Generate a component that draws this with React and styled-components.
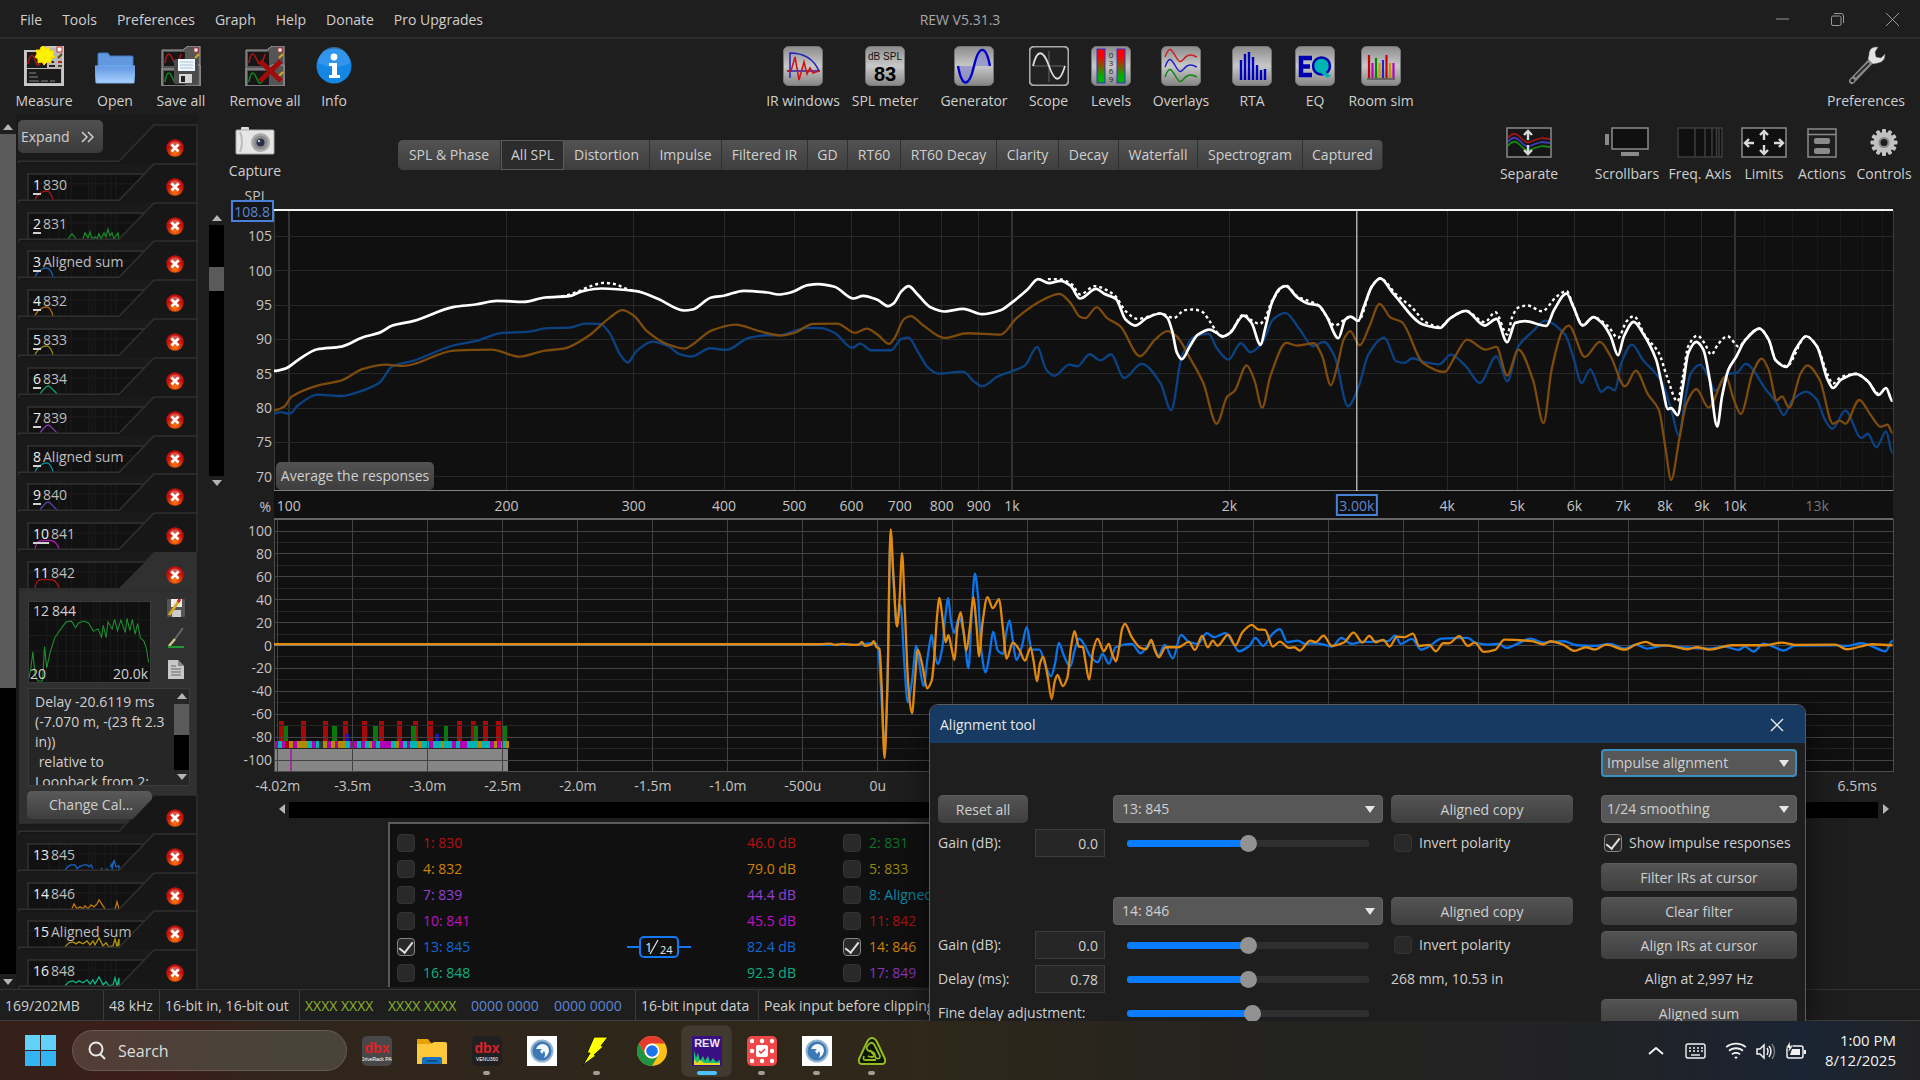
import React from "react";
import styled, { createGlobalStyle, css } from "styled-components";
import { RiWifiLine } from "react-icons/ri";

const GlobalStyle = createGlobalStyle`
    * { box-sizing: border-box; }
    body {
        margin: 0;
        background: #1e1e1e;
        color: #cfcfcf;
        font-family: "Open Sans", "Noto Sans", sans-serif;
        font-size: 14px;
        line-height: 20px;
        overflow: hidden;
    }
    button, input, select, textarea { font: inherit; color: inherit; }
    button { border: 0; padding: 0; background: none; }
    svg { display: block; }
`

/* ---------- frame ---------- */

const Screen = styled.div`
    display: flex;
    flex-direction: column;
    height: 100vh;
`

const AppWindow = styled.div`
    position: relative;
    flex: 1;
    min-height: 0;
    display: flex;
    flex-direction: column;
    overflow: hidden;
`

const TitleBar = styled.header`
    display: grid;
    grid-template-columns: 1fr auto 1fr;
    align-items: center;
    height: 39px;
    padding-top: 2px;
    border-bottom: 2px solid #2d2d2d;
`

const MenuList = styled.nav`
    display: flex;
    gap: 20px;
    padding-left: 20px;
`

const AppTitle = styled.h1`
    margin: 0;
    font-size: 14px;
    font-weight: 400;
    color: #a8a8a8;
`

const WindowButtons = styled.div`
    justify-self: end;
    display: flex;
    button {
        display: grid;
        place-items: center;
        width: 55px;
        height: 35px;
    }
`

const Toolbar = styled.div`
    display: flex;
    align-items: flex-start;
    height: 76px;
    padding: 7px 10px 0 8px;
`

const Spacer = styled.div`
    flex: ${(props) => props.$grow || 1};
`

const ToolButton = styled.button`
    display: flex;
    flex-direction: column;
    align-items: center;
    flex: none;
    gap: ${(props) => props.$gap || 5}px;
    width: ${(props) => props.$width}px;
    white-space: nowrap;
`

const Workspace = styled.div`
    flex: 1;
    min-height: 0;
    display: grid;
    grid-template-columns: 16px 182px minmax(0, 1fr);
`

/* ---------- scrollbars ---------- */

const Scroll = styled.div`
    display: flex;
    flex-direction: ${(props) => (props.$horizontal ? "row" : "column")};
    min-height: 0;
    padding-top: ${(props) => props.$top || 0};
`

const Track = styled.div`
    flex: 1;
    background: #000;
    padding-top: ${(props) => props.$offset || 0};
`

const Thumb = styled.div`
    height: ${(props) => props.$size};
    background: #5a5a5a;
`

const ScrollArrow = styled.button`
    display: grid;
    place-items: center;
    flex: none;
    width: 15px;
    height: 15px;
    svg { transform: rotate(${(props) => props.$turn || 0}deg); }
`

function Arrow({ turn, label }) {
    return (
        <ScrollArrow $turn={turn} aria-label={label}>
            <svg width="10" height="6"><path d="M0 6L5 0L10 6Z" fill="#b4b4b4" /></svg>
        </ScrollArrow>
    )
}

/* ---------- measurement list ---------- */

const Side = styled.aside`
    display: grid;
    grid-template-columns: minmax(0, 1fr);
    grid-template-rows: repeat(12, minmax(0, 1fr)) 204px repeat(5, minmax(0, 1fr));
    padding: 10px 1px 0 3px;
    background: #1a1a1a;
`

const TabRow = styled.div`
    position: relative;
    display: flex;
    justify-content: space-between;
    > svg {
        position: absolute;
        inset: 0;
        width: 100%;
        height: 100%;
        overflow: visible;
    }
`

const TabLabel = styled.div`
    position: relative;
    display: flex;
    gap: 2px;
    height: 20px;
    margin: 11px 0 0 14px;
    color: #bdbdbd;
    white-space: nowrap;
    b {
        font-weight: 400;
        color: #ededed;
        line-height: 19px;
        border-bottom: ${(props) => (props.$key ? "2px solid #d0d0d0" : "0")};
    }
`

const RemoveButton = styled.button`
    position: relative;
    align-self: flex-start;
    margin: 14px 13px 0 auto;
`

const ExpandButton = styled.button`
    position: relative;
    z-index: 1;
    display: flex;
    align-items: center;
    justify-content: space-between;
    width: 85px;
    height: 33px;
    margin: -5px 0 0 -1px;
    padding: 0 8px 0 3px;
    border-radius: 5px;
    background: linear-gradient(#4f4f4f, #3b3b3b);
`

const CalButton = styled.button`
    position: relative;
    width: 125px;
    height: 28px;
    margin: -4px 0 0 8px;
    padding-right: 19px;
    border-radius: 5px;
    background: linear-gradient(#5a5a5a, #3e3e3e);
    clip-path: polygon(0 0, 100% 0, 100% 8px, 106px 100%, 0 100%);
    text-align: right;
`

const SelectedPanel = styled.section`
    padding: 10px 7px 9px 9px;
    background: #303030;
    display: flex;
    flex-direction: column;
    gap: 5px;
`

const SelectedTop = styled.div`
    display: grid;
    grid-template-columns: 123px 1fr;
    height: 82px;
`

const Preview = styled.div`
    position: relative;
    background: #101010;
    border: 1px solid #3a3a3a;
    display: flex;
    flex-direction: column;
    justify-content: space-between;
    padding: 0 2px 0 4px;
    > svg {
        position: absolute;
        inset: 0;
        width: 100%;
        height: 100%;
    }
    div {
        position: relative;
        display: flex;
        justify-content: space-between;
        line-height: 16px;
        margin-left: -3px;
    }
    div:first-of-type { margin: 1px 0 0; justify-content: flex-start; gap: 3px; }
`

const PreviewTools = styled.div`
    display: flex;
    flex-direction: column;
    align-items: center;
    justify-content: space-around;
    padding-left: 10px;
    margin: -8px 0 -2px;
`

const Notes = styled.div`
    display: flex;
    flex: 1;
    min-height: 0;
    border: 1px solid #3a3a3a;
    background: #262626;
    textarea {
        flex: 1;
        width: 0;
        padding: 3px 0 0 6px;
        border: 0;
        background: none;
        resize: none;
        overflow: hidden;
        white-space: pre;
    }
`

/* ---------- graph ---------- */

const GraphPane = styled.main`
    display: flex;
    flex-direction: column;
    min-width: 0;
    min-height: 0;
`

const GraphHeader = styled.div`
    display: flex;
    align-items: flex-start;
    height: 95px;
    padding: 12px 7px 0 0;
`

const GraphTabs = styled.div`
    display: flex;
    margin: 13px 0 0 86px;
    height: 30px;
    border-radius: 5px;
    overflow: hidden;
    background: linear-gradient(#525252, #3e3e3e);
`

const GraphTab = styled.button`
    width: ${(props) => props.$width}px;
    white-space: nowrap;
    border-right: 1px solid #303030;
    ${(props) => props.$active && css`
        background: #2c2c2c;
        border: 1px solid #5c5c5c;
    `}
`

const GraphGrid = styled.div`
    flex: 1;
    min-height: 0;
    display: grid;
    grid-template-columns: 26px 50px minmax(0, 1fr) 27px;
    grid-template-rows: 280fr 28px 252fr 31px 16px;
`

const Canvas = styled.svg`
    width: 100%;
    height: 100%;
    overflow: visible;
    font-size: 14px;
    fill: #c4c4c4;
`

const Plot = styled.div`
    position: relative;
    grid-column: 3;
    background: #101010;
    min-height: 0;
`

const Gutter = styled.div`
    grid-column: 2;
    min-height: 0;
`

const SplScroll = styled.div`
    grid-column: 1;
    justify-self: end;
    display: grid;
    min-height: 0;
`

const AverageButton = styled.button`
    position: absolute;
    left: 2px;
    bottom: 1px;
    width: 158px;
    height: 28px;
    border-radius: 5px;
    background: linear-gradient(#525252, #3e3e3e);
    white-space: nowrap;
`

const TimeScroll = styled.div`
    grid-column: 3;
    display: grid;
`

/* ---------- legend ---------- */

const Legend = styled.section`
    display: grid;
    grid-template-columns: repeat(3, minmax(0, 446px));
    grid-auto-rows: 26px;
    align-self: center;
    height: 165px;
    margin: 4px 27px 2px 76px;
    padding: 6px 44px 0 7px;
    border: solid #5a5a5a;
    border-width: 2px 0 0 2px;
    background: #101010;
`

const LegendItem = styled.label`
    display: grid;
    grid-template-columns: 26px 1fr 120px 96px;
    align-items: center;
    color: ${(props) => props.$color};
    white-space: nowrap;
`

const CheckBox = styled.input`
    appearance: none;
    display: grid;
    place-items: center;
    width: 18px;
    height: 18px;
    margin: 0;
    border: 1px solid #343434;
    border-radius: 4px;
    background: #292929;
    &:checked { border-color: #848484; }
    &:checked::before {
        content: "";
        width: 6px;
        height: 12px;
        border: solid #e0e0e0;
        border-width: 0 2px 2px 0;
        transform: translateY(-1px) rotate(38deg);
    }
`

/* ---------- status bar ---------- */

const StatusBar = styled.footer`
    display: flex;
    height: 32px;
    flex: none;
    border-top: 1px solid #333;
    border-bottom: 1px solid #3d3d3d;
    white-space: pre;
`

const StatusCell = styled.div`
    display: flex;
    align-items: center;
    gap: 10px;
    flex: none;
    width: ${(props) => (props.$width ? props.$width + "px" : "auto")};
    padding: 2px 0 0 5px;
    border-right: 1px solid #3a3a3a;
`

const Bits = styled.span`
    color: ${(props) => props.$color};
    width: 73px;
`

/* ---------- alignment window ---------- */

const ToolWindow = styled.section`
    position: absolute;
    left: 929px;
    top: 704px;
    width: 877px;
    bottom: 0;
    overflow: hidden;
    border: 1px solid #5c5c5c;
    border-bottom-width: 0;
    border-radius: 9px 9px 0 0;
    background: #1e1e1e;
    box-shadow: 0 8px 34px rgba(0, 0, 0, 0.6);
`

const ToolTitle = styled.div`
    display: flex;
    align-items: center;
    justify-content: space-between;
    height: 38px;
    padding: 2px 21px 0 10px;
    background: #163a61;
    color: #e8e8e8;
`

const ToolBody = styled.div`
    display: flex;
    gap: 28px;
    padding: 6px 8px 0;
`

const ToolGrid = styled.div`
    display: grid;
    grid-template-columns: 167px 270px 182px;
    grid-auto-rows: 28px;
    gap: 6px 8px;
    align-items: center;
    margin-top: 46px;
`

const ToolSide = styled.div`
    flex: 1;
    display: grid;
    grid-template-rows: 40px;
    grid-auto-rows: 28px;
    gap: 6px;
    align-items: center;
    text-align: center;
    white-space: nowrap;
    > :first-child { align-self: start; }
`

const PushButton = styled.button`
    width: ${(props) => props.$width || "100%"};
    height: 28px;
    border-radius: 5px;
    border-top: 1px solid #5c5c5c;
    background: linear-gradient(#535353, #3f3f3f);
`

const Field = styled.label`
    display: flex;
    align-items: center;
    justify-content: space-between;
    white-space: nowrap;
    input {
        width: 70px;
        height: 28px;
        padding: 0 6px;
        border: 1px solid #3c3c3c;
        background: #262626;
        text-align: right;
    }
`

const CheckField = styled.label`
    display: flex;
    align-items: center;
    gap: 7px;
    padding-left: 3px;
`

const SelectBox = styled.div`
    position: relative;
    height: 28px;
    select {
        appearance: none;
        width: 100%;
        height: 28px;
        padding: 0 ${(props) => props.$pad}px;
        border: ${(props) => (props.$focus ? "2px solid #3b8ec0" : "1px solid #626262")};
        border-radius: 4px;
        background: #575757;
        outline: 0;
    }
    svg {
        position: absolute;
        right: 8px;
        top: 11px;
    }
`

const Slider = styled.input`
    appearance: none;
    width: 242px;
    height: 20px;
    margin: 0 14px;
    background: none;
    &::-webkit-slider-runnable-track {
        height: 7px;
        border-radius: 3px;
        background: linear-gradient(90deg, #0a7cff var(--fill), #2f2f2f var(--fill));
    }
    &::-webkit-slider-thumb {
        appearance: none;
        width: 17px;
        height: 17px;
        margin-top: -5px;
        border-radius: 50%;
        background: #929292;
    }
`

/* ---------- taskbar ---------- */

const TaskBar = styled.footer`
    display: flex;
    align-items: center;
    flex: none;
    height: 59px;
    padding: 0 24px 0 25px;
    background: linear-gradient(90deg, #35211a 0, #3c1d19 160px, #30251c 280px, #2f281a 900px, #24231f 1250px, #212225 1600px, #1a2433 1810px, #222224 100%);
    color: #f2f2f2;
`

const SearchBox = styled.label`
    display: flex;
    align-items: center;
    gap: 12px;
    width: 275px;
    height: 41px;
    margin: 0 2px 0 16px;
    padding-left: 14px;
    border: 1px solid #655d56;
    border-radius: 21px;
    background: linear-gradient(90deg, #553c36, #4b423a 50%, #494439);
    input {
        width: 180px;
        border: 0;
        padding: 0;
        background: none;
        outline: 0;
        font-size: 16px;
    }
    input::placeholder { color: #dedede; opacity: 1; }
`

const TaskButton = styled.button`
    position: relative;
    display: grid;
    place-items: center;
    width: 49px;
    height: 50px;
    margin: 0 3px;
    border-radius: 6px;
    ${(props) => props.$active && css`
        background: rgba(255, 255, 255, 0.09);
        box-shadow: 0 0 0 1px rgba(255, 255, 255, 0.06);
    `}
    &::after {
        content: "";
        display: ${(props) => (props.$open ? "block" : "none")};
        position: absolute;
        bottom: 1px;
        width: ${(props) => (props.$active ? 20 : 7)}px;
        height: 4px;
        border-radius: 2px;
        background: ${(props) => (props.$active ? "#4cc2ff" : "#a09c96")};
    }
`

const Tray = styled.div`
    display: flex;
    align-items: center;
    gap: 9px;
    margin-left: auto;
`

const Clock = styled.time`
    width: 80px;
    padding-bottom: 2px;
    font-size: 15px;
    text-align: right;
`

/* ---------- chart data ---------- */

// lay the second stretch of a trace after the first one
const extend = (head, tail, dx, dy = 0, scale = 1) => [
    ...head,
    ...tail.map(([x, y]) => [x * scale + dx, y + dy]),
]

// smooth path, flat at every local peak and dip
function smooth(points) {
    const n = points.length
    const slope = points.map((p, i) => {
        if (i === 0 || i === n - 1) return 0
        const a = (p[1] - points[i - 1][1]) / (p[0] - points[i - 1][0])
        const b = (points[i + 1][1] - p[1]) / (points[i + 1][0] - p[0])
        return a * b <= 0 ? 0 : (2 * a * b) / (a + b)
    })
    let d = `M${points[0][0]} ${points[0][1]}`
    for (let i = 1; i < n; i++) {
        const [x0, y0] = points[i - 1]
        const [x1, y1] = points[i]
        const h = (x1 - x0) / 3
        d += `C${(x0 + h).toFixed(1)} ${(y0 + slope[i - 1] * h).toFixed(1)} ${(x1 - h).toFixed(1)} ${(y1 - slope[i] * h).toFixed(1)} ${x1.toFixed(1)} ${y1}`
    }
    return d
}

const sumLow = [[64,574],[85,567],[110,540],[145,509],[190,501],[230,473],[260,460],[285,438],[325,424],[400,382],[440,375],[480,364],[530,367],[570,354],[615,350],[640,335],[675,327],[740,335],[780,358],[830,393],[845,390],[880,354],[905,348],[940,334],[985,339],[1005,345],[1030,338],[1060,317],[1080,314],[1110,322],[1145,357],[1163,349],[1190,361],[1210,380],[1220,372],[1235,335],[1248,320],[1265,345],[1290,384],[1315,396],[1350,388],[1385,404],[1420,392],[1440,370],[1470,330],[1490,299],[1510,311],[1532,304],[1550,318]]
const sumHigh = [[0,357],[30,328],[45,343],[67,358],[85,420],[103,438],[125,415],[150,402],[163,415],[172,455],[181,520],[190,539],[205,500],[220,465],[242,450],[255,460],[265,471],[280,460],[305,408],[320,430],[337,496],[345,450],[358,370],[372,328],[384,320],[405,353],[425,372],[445,378],[460,410],[482,476],[495,420],[505,411],[519,424],[530,380],[545,320],[560,297],[585,343],[640,435],[672,445],[690,417],[720,394],[755,438],[777,418],[797,488],[812,430],[830,425],[870,439],[885,390],[908,342],[920,380],[938,438],[958,413],[975,432],[990,470],[1004,527],[1015,470],[1033,427],[1050,460],[1075,540],[1087,625],[1097,688],[1103,685],[1115,706],[1125,620],[1135,520],[1150,487],[1163,510],[1175,600],[1189,740],[1198,650],[1210,570],[1225,530],[1240,485],[1268,447],[1285,480],[1298,542],[1318,562],[1335,510],[1355,470],[1375,500],[1395,600],[1405,625],[1420,600],[1448,583],[1470,605],[1490,646],[1504,625],[1516,664]]
const idealLow = [[600,350],[630,337],[655,320],[680,310],[700,314],[722,328],[740,335]]
const idealHigh = [[-60,299],[-36,300],[-15,315],[0,345],[28,320],[50,332],[67,352],[85,395],[108,418],[150,402],[175,415],[195,392],[212,390],[228,397],[242,425],[258,462],[268,470],[282,455],[305,405],[320,422],[335,433],[345,418],[358,365],[384,318],[405,350],[445,378],[460,410],[475,438],[505,411],[519,424],[545,320],[560,297],[590,345],[620,385],[645,428],[672,442],[690,417],[720,394],[755,428],[775,398],[797,465],[807,410],[817,385],[835,378],[862,395],[890,350],[908,335],[920,378],[938,436],[958,413],[985,440],[1004,475],[1020,425],[1033,410],[1055,470],[1080,520],[1095,590],[1115,665],[1125,590],[1135,500],[1152,468],[1165,490],[1178,525],[1190,495],[1208,470],[1230,502],[1240,482],[1268,447],[1285,480],[1298,542],[1318,560],[1355,470],[1375,500],[1395,585],[1405,612],[1420,592],[1448,583],[1470,605],[1490,642]]
const woofLow = [[64,692],[82,682],[98,650],[145,618],[190,602],[230,568],[272,555],[305,559],[400,513],[470,510],[522,531],[570,513],[605,507],[650,470],[690,415],[714,392],[735,408],[760,455],[795,492],[830,507],[845,495],[880,453],[925,435],[970,455],[1010,468],[1035,460],[1070,433],[1115,432],[1148,460],[1170,447],[1190,465],[1212,493],[1222,475],[1240,418],[1252,410],[1275,437],[1315,475],[1358,461],[1420,465],[1450,415],[1500,360],[1530,343],[1550,370]]
const woofHigh = [[0,412],[10,416],[31,383],[50,415],[75,440],[112,530],[140,480],[163,455],[180,470],[205,535],[230,610],[255,732],[275,650],[288,635],[311,557],[325,600],[340,684],[355,590],[385,490],[405,498],[437,491],[452,530],[468,617],[480,560],[492,480],[504,455],[522,497],[540,440],[559,373],[580,415],[600,427],[640,550],[680,577],[700,530],[722,480],[757,510],[777,502],[797,588],[818,510],[845,600],[865,730],[880,570],[900,455],[912,438],[942,532],[970,487],[990,530],[1017,620],[1037,573],[1060,645],[1080,690],[1092,800],[1103,900],[1118,780],[1132,670],[1150,628],[1173,684],[1205,590],[1220,660],[1233,703],[1255,580],[1272,537],[1285,570],[1300,662],[1310,650],[1323,684],[1345,580],[1357,557],[1380,600],[1405,732],[1418,723],[1428,732],[1454,661],[1475,705],[1494,741],[1507,735],[1516,760]]
const hornLow = [[64,702],[75,697],[93,702],[110,675],[145,645],[190,649],[225,635],[260,610],[285,560],[325,543],[400,497],[440,485],[490,460],[535,457],[575,446],[615,444],[645,432],[672,433],[690,460],[710,525],[724,549],[740,515],[770,486],[800,500],[820,523],[842,531],[878,506],[908,511],[950,475],[985,467],[1005,467],[1060,445],[1085,446],[1110,460],[1143,505],[1158,492],[1178,512],[1215,512],[1235,478],[1248,474],[1265,515],[1285,565],[1303,582],[1350,576],[1370,605],[1385,620],[1415,590],[1465,558],[1488,502],[1505,570],[1520,589],[1548,555]]
const hornHigh = [[-5,560],[18,524],[38,542],[58,524],[82,595],[115,553],[150,610],[170,692],[190,530],[215,470],[240,462],[255,505],[277,540],[300,491],[318,518],[340,490],[360,420],[383,400],[410,450],[435,500],[455,487],[475,530],[500,680],[520,620],[538,525],[568,474],[590,545],[605,550],[620,536],[645,548],[670,554],[692,525],[720,560],[746,610],[777,530],[797,605],[818,500],[845,455],[868,423],[905,465],[920,530],[936,610],[952,569],[973,637],[985,622],[998,632],[1010,550],[1030,495],[1050,540],[1085,605],[1105,700],[1117,767],[1130,650],[1140,580],[1157,555],[1172,590],[1185,633],[1210,582],[1225,580],[1242,553],[1280,630],[1300,670],[1313,706],[1330,660],[1355,636],[1375,660],[1390,720],[1404,747],[1428,693],[1458,775],[1470,762],[1486,803],[1504,755],[1516,820]]

const splTraces = [
    { d: smooth(extend(hornLow, hornHigh, 1568)), color: "#0b4284" },
    { d: smooth(extend(woofLow, woofHigh, 1568)), color: "#7d4b0c" },
    { d: smooth(idealLow), color: "#fff", dash: "3 3", width: 2.4 },
    { d: smooth(extend([], idealHigh, 1568)), color: "#fff", dash: "3 3", width: 2.4 },
    { d: smooth(extend(sumLow, sumHigh, 1568)), color: "#fff", width: 2.7 },
]

const impulseA = [[-1471,431],[60,431],[85,429],[100,433],[120,430],[150,433],[165,433],[175,424],[183,436],[200,432],[208,422],[216,440],[224,445],[230,560],[238,772],[246,560],[255,87],[263,230],[273,378],[280,300],[287,158],[295,330],[305,560],[315,638],[323,540],[331,447],[345,500],[357,563],[370,540],[378,460],[384,360],[392,292],[400,350],[409,425],[417,404],[425,440],[434,478],[442,380],[451,335],[459,390],[467,450],[477,380],[487,290],[495,370],[503,467],[512,370],[526,290],[541,323],[559,296],[568,370],[580,474],[597,426],[615,447],[631,480],[647,441],[655,480],[665,542],[673,490],[682,468],[695,530],[706,596],[714,545],[722,523],[737,556],[750,530],[760,440],[770,392],[782,438],[793,439],[800,480],[811,537],[822,450],[834,414],[852,452],[866,430],[875,460],[886,482],[895,440],[903,385],[911,370],[930,410],[955,442],[970,446],[985,418],[995,450],[1006,470],[1025,440],[1060,440],[1090,424],[1107,448],[1127,406],[1143,440],[1157,420],[1170,436],[1200,402],[1220,435],[1240,395],[1266,373],[1285,387],[1303,388],[1325,438],[1345,423],[1370,442],[1385,440],[1400,450],[1430,420],[1445,425],[1467,405],[1490,436],[1525,425],[1551,396]]
const impulseATail = [[62,126],[80,106],[98,125],[118,118],[135,138],[155,108],[175,110],[198,99],[215,136],[242,133],[260,152],[280,128],[295,128],[323,107],[347,136],[365,126],[390,154],[420,148],[445,117],[520,122],[550,131],[570,122],[605,133],[635,151],[665,140],[690,147],[720,132],[770,147],[800,132],[828,124],[850,134],[890,135],[940,146],[965,140],[1000,147],[1060,134],[1150,134],[1195,126],[1230,133],[1340,132],[1370,146],[1440,131],[1494,134]]
const impulseB = [[-1471,433],[150,433],[210,428],[220,440],[228,560],[238,740],[246,560],[255,100],[263,230],[272,375],[283,313],[293,480],[303,605],[315,540],[327,435],[337,500],[347,556],[360,460],[370,402],[378,460],[387,490],[400,440],[408,350],[416,292],[424,360],[433,397],[447,350],[460,400],[473,503],[482,340],[491,220],[500,290],[508,440],[521,515],[532,460],[542,393],[555,450],[570,460],[578,400],[588,360],[597,420],[607,478],[622,440],[636,380],[650,447],[672,447],[690,500],[704,527],[715,490],[726,427],[740,465],[758,498],[770,450],[783,414],[797,432],[815,468],[835,485],[848,460],[866,489],[885,440],[930,430],[955,458],[985,425],[1005,465],[1022,433],[1045,473],[1068,403],[1090,424],[1115,430],[1140,398],[1160,410],[1192,398],[1215,430],[1230,452],[1260,435],[1276,412],[1298,436],[1322,402],[1345,386],[1365,425],[1395,420],[1415,430],[1440,428],[1460,430],[1490,438],[1517,412],[1545,430]]
const impulseBTail = [[62,124],[85,124],[110,120],[130,122],[150,105],[165,130],[195,115],[220,147],[245,135],[275,114],[345,112],[370,128],[400,132],[430,130],[450,142],[480,130],[515,114],[550,126],[605,122],[640,134],[690,136],[730,130],[770,144],[800,132],[830,144],[880,134],[920,140],[1000,144],[1040,138],[1078,148],[1095,138],[1119,153],[1145,129],[1175,140],[1200,150],[1230,135],[1340,134],[1370,136],[1410,128],[1440,138],[1475,152],[1494,120]]

const irTraces = [
    { d: smooth(extend(impulseB, impulseBTail, 1512, 300, 1.036)), color: "#0a74ea" },
    { d: smooth(extend(impulseA, impulseATail, 1512, 300, 1.036)), color: "#e38a0c" },
]

const pct = (v) => `${(v * 100).toFixed(3)}%`
const freqX = (f) => pct(Math.log(f / 95.4) / Math.log(16543 / 95.4))
const splY = (db) => pct((108.85 - db) / 40.85)
const timeX = (i) => pct((3.7 + i * 75) / 1618.5)
const percentY = (v) => pct((126.3 - v * 1.143) / 252)

const freqLines = [100, 200, 300, 400, 500, 600, 700, 800, 900, 1000, 2000, 3000, 4000, 5000, 6000, 7000, 8000, 9000, 10000, 11000, 12000, 13000, 14000, 15000, 16000]
const freqLabels = [[100, "100"], [200, "200"], [300, "300"], [400, "400"], [500, "500"], [600, "600"], [700, "700"], [800, "800"], [900, "900"], [1000, "1k"], [2000, "2k"], [4000, "4k"], [5000, "5k"], [6000, "6k"], [7000, "7k"], [8000, "8k"], [9000, "9k"], [10000, "10k"], [13000, "13k"]]
const splTicks = [105, 100, 95, 90, 85, 80, 75, 70]
const percentTicks = [100, 80, 60, 40, 20, 0, -20, -40, -60, -80, -100]
const timeLabels = ["-4.02m", "-3.5m", "-3.0m", "-2.5m", "-2.0m", "-1.5m", "-1.0m", "-500u", "0u"]

const clipRed = [790, 852, 915, 971, 1023, 1072, 1122, 1167, 1209, 1289, 1328, 1363, 1398]
const clipGreen = [803, 938, 1054, 1160, 1251, 1335, 1414]
const clipStrip = "mcmromooocmcxomomoocmmcmcomcmmmcomcmccoccmccoccmcmmcccoccmomco"
const stripColors = { m: "#b400b4", c: "#00b4b4", o: "#b08a00", r: "#a00", x: "#333" }

function Traces({ items, box }) {
    return (
        <svg width="100%" height="100%" viewBox={box} preserveAspectRatio="none" fill="none">
            {items.map((t, i) => (
                <path key={i} d={t.d} stroke={t.color} strokeWidth={t.width || 2.3} strokeDasharray={t.dash} strokeLinejoin="round" vectorEffect="non-scaling-stroke" />
            ))}
        </svg>
    )
}

function SplPlot() {
    return (
        <Plot>
            <Canvas>
                <g shapeRendering="crispEdges">
                    {freqLines.map((f) => (
                        <line key={f} x1={freqX(f)} x2={freqX(f)} y1="0" y2="100%" strokeWidth={f % 9000 === 1000 || f === 100 ? 2 : 1}
                            stroke={f > 10000 ? "#191919" : f === 100 || f === 1000 || f === 10000 ? "#333" : "#292929"} />
                    ))}
                    {splTicks.map((v) => <line key={v} x1="0" x2="100%" y1={splY(v)} y2={splY(v)} stroke="#272727" />)}
                    <rect width="100%" height="100%" fill="none" stroke="#3c3c3c" />
                    <line x1="0" x2="100%" y1="100%" y2="100%" stroke="#808080" strokeWidth="2" />
                </g>
                <Traces items={splTraces} box="64 92 3021 840" />
                <line x1="0" x2="100%" y1="0" y2="0" stroke="#f4f4f4" strokeWidth="2" />
                <svg x={freqX(3000)} overflow="visible">
                    <line y1="0" y2="284" stroke="#f0f0f0" strokeWidth="1" />
                </svg>
            </Canvas>
            <AverageButton>Average the responses</AverageButton>
        </Plot>
    )
}

function FreqAxis() {
    return (
        <Plot>
            <Canvas textAnchor="middle">
                {freqLabels.map(([f, text]) => (
                    <text key={f} x={freqX(f)} y="20" fill={f === 13000 ? "#777" : "#c4c4c4"}>{text}</text>
                ))}
                <svg x={freqX(3000)} overflow="visible">
                    <rect x="-20" y="4" width="40" height="20" fill="#101010" stroke="#4a80d8" strokeWidth="2" />
                    <text y="20" fill="#5c86d2">3.00k</text>
                </svg>
            </Canvas>
        </Plot>
    )
}

function ImpulsePlot() {
    return (
        <Plot>
            <Canvas>
                <svg width="100%" height="100%" viewBox="770 106 4532 706" preserveAspectRatio="none" shapeRendering="crispEdges">
                    <rect x="770" y="749" width="656" height="63" fill="#868686" />
                    {clipRed.map((x) => <rect key={x} x={x - 7} y="670" width="14" height="58" fill="#a80808" />)}
                    {clipGreen.map((x) => <rect key={x} x={x - 6} y="685" width="13" height="43" fill="#0a780a" />)}
                    {[975, 1227].map((x) => <rect key={x} x={x - 5} y="707" width="10" height="21" fill="#1414c8" />)}
                    {[...clipStrip].map((c, i) => <rect key={i} x={770 + i * 10.6} y="728" width="10.7" height="21" fill={stripColors[c]} />)}
                    <rect x="815" y="749" width="4" height="63" fill="#a030a0" />
                </svg>
                <g shapeRendering="crispEdges">
                    {percentTicks.map((v) => (
                        <React.Fragment key={v}>
                            <line x1="0" x2="100%" y1={percentY(v)} y2={percentY(v)} stroke="#444" />
                            {v > -100 && <line x1="0" x2="100%" y1={percentY(v - 10)} y2={percentY(v - 10)} stroke="#242424" />}
                        </React.Fragment>
                    ))}
                    {Array.from({ length: 22 }, (_, i) => (
                        <line key={i} x1={timeX(i)} x2={timeX(i)} y1="0" y2="100%" stroke="#424242" />
                    ))}
                    <rect width="100%" height="100%" fill="none" stroke="#4c4c4c" />
                    <line x1="0" x2="100%" y1="0" y2="0" stroke="#666" strokeWidth="2" />
                </g>
                <Traces items={irTraces} box="-1471 56 4532 756" />
            </Canvas>
        </Plot>
    )
}

/* ---------- icons ---------- */

const Tile = ({ children, dark }) => (
    <svg width="40" height="40" viewBox="0 0 40 40" fill="none">
        <defs>
            <linearGradient id="tile" x1="0" y1="0" x2="0" y2="1">
                <stop offset="0" stopColor="#8c8c8c" /><stop offset=".5" stopColor="#c8c8c8" /><stop offset="1" stopColor="#858585" />
            </linearGradient>
        </defs>
        <rect x=".5" y=".5" width="39" height="39" rx="5" fill={dark ? "#222" : "url(#tile)"} stroke={dark ? "#aaa" : "#777"} strokeWidth={dark ? 2 : 1} />
        {children}
    </svg>
)

const GraphCard = ({ y = 0, wave = "#b01515" }) => (
    <g>
        <path d={`M1 ${y + 4}H22L27 ${y}H39V40H1Z`} fill="#555" stroke="#a5a5a5" />
        <rect x="3" y={y + 6} width="21" height="14" fill="#161616" />
        <path d={`M4 ${y + 17}C6 ${y + 4} 9 ${y + 7} 12 ${y + 14}S17 ${y + 19} 20 ${y + 8}`} stroke={wave} strokeWidth="1.6" />
    </g>
)

const toolIcons = {
    measure: (
        <svg width="40" height="40" viewBox="0 0 40 40" fill="none">
            <path d="M1 5H18L22 1H39V39H1Z" fill="#b8b8b8" stroke="#c8c8c8" strokeWidth="2" />
            <rect x="3" y="6" width="20" height="16" fill="#1b1b1b" />
            <path d="M4 18C6 7 9 8 11 14S14 20 16 18" stroke="#b01515" strokeWidth="1.5" />
            <path d="M25 20h6M25 16h5" stroke="#222" strokeWidth="2" />
            <rect x="3" y="23" width="34" height="14" fill="#1a1a1a" />
            <path d="M5 27h7M5 31h9M5 35h10M17 35h7M26 35h5" stroke="#888" />
            <rect x="33" y="1" width="5" height="5" fill="#fff" stroke="#c33" />
            <path d="M34 12l4-4M34 20h4" stroke="#5a4a10" strokeWidth="2" /><path d="M34 16h4" stroke="#b22" strokeWidth="2" />
            <path d="M20 0l2 3 3-2 1 4 4 0-1 4 2 2-4 2 0 4-4-1-3 3-2-3-4 1 0-4-3-2 2-3-1-4 4 0 1-3Z" fill="#fff200" stroke="#ffd400" />
        </svg>
    ),
    open: (
        <svg width="40" height="40" viewBox="0 0 40 40">
            <defs><linearGradient id="fold" x1="0" y1="0" x2="0" y2="1"><stop stopColor="#5f95e0" /><stop offset="1" stopColor="#a9d2ff" /></linearGradient></defs>
            <path d="M3 8q0-1 1-1h9l2 3h22q1 0 1 1v12H3Z" fill="#6299de" stroke="#3f76c4" />
            <path d="M0 20h40l-1 17H1Z" fill="url(#fold)" stroke="#79aef0" />
        </svg>
    ),
    save: (
        <svg width="40" height="40" viewBox="0 0 40 40" fill="none">
            <GraphCard /><GraphCard y={19} wave="#108a20" />
            <rect x="13" y="13" width="24" height="25" rx="2" fill="#4a4a4a" />
            <rect x="17" y="13" width="17" height="12" fill="#f0f6fb" /><path d="M19 16h13M19 19h13M19 22h13" stroke="#a8c4d8" />
            <rect x="18" y="28" width="13" height="9" fill="#d4d4d4" /><rect x="20" y="30" width="4" height="6" fill="#222" />
            <rect x="33" y="2" width="4" height="4" fill="#fff" stroke="#c33" /><path d="M34 12l4-4" stroke="#d8a820" strokeWidth="2" />
        </svg>
    ),
    remove: (
        <svg width="40" height="40" viewBox="0 0 40 40" fill="none">
            <GraphCard /><GraphCard y={19} wave="#108a20" />
            <rect x="33" y="2" width="4" height="4" fill="#fff" stroke="#c33" /><path d="M34 12l4-4M34 30l4-4" stroke="#d8a820" strokeWidth="2" />
            <path d="M15 15L36 35M36 15L15 35" stroke="#a00c0c" strokeWidth="5" />
        </svg>
    ),
    info: (
        <svg width="40" height="40" viewBox="0 0 40 40">
            <circle cx="20" cy="20" r="17.5" fill="#1486e4" />
            <path d="M4 17a16 16 0 0 1 32 0q-16 8-32 0Z" fill="#42a0f0" opacity=".6" />
            <circle cx="20" cy="11" r="3.4" fill="#fff" />
            <path d="M15 17h8v12h3v3H15v-3h3v-9h-3Z" fill="#fff" />
        </svg>
    ),
    ir: <Tile><path d="M7 32V7Q28 7 36 25M4 25h33" stroke="#2222c0" strokeWidth="1.5" /><path d="M4 25h4l4-14 4 23 5-18 3 12 3-6 3 5 6-2" stroke="#d01515" strokeWidth="1.6" /></Tile>,
    spl: (
        <Tile>
            <text x="20" y="14" fontSize="10" fill="#111" textAnchor="middle" fontFamily="Liberation Sans, sans-serif">dB SPL</text>
            <text x="20" y="35" fontSize="20" fontWeight="700" fill="#000" textAnchor="middle" fontFamily="Liberation Sans, sans-serif">83</text>
        </Tile>
    ),
    gen: <Tile><path d="M4 20C8 42 15 42 20 20S32-1 36 20Z" fill="#8a8ad0" opacity=".7" /><path d="M4 20C8 42 15 42 20 20S32-1 36 20" stroke="#0000c8" strokeWidth="2.4" /></Tile>,
    scope: <Tile dark><path d="M20 5V36M4 20H36" stroke="#666" /><path d="M4 20C8 3 14 3 20 20S31 37 36 20" stroke="#ddd" strokeWidth="1.8" /></Tile>,
    levels: (
        <Tile>
            <defs><linearGradient id="lvl" x1="0" y1="0" x2="0" y2="1"><stop offset=".2" stopColor="#f00" /><stop offset=".8" stopColor="#00b000" /></linearGradient></defs>
            <rect x="6" y="3" width="8" height="34" fill="url(#lvl)" stroke="#33c" /><rect x="26" y="3" width="8" height="34" fill="url(#lvl)" stroke="#33c" />
            {["0", "3", "6", "9"].map((t, i) => <text key={t} x="20" y={12 + i * 8} fontSize="8" fill="#222" textAnchor="middle">{t}</text>)}
        </Tile>
    ),
    overlays: (
        <Tile>
            {["#c22", "#22c", "#181"].map((c, i) => (
                <path key={c} transform={`translate(0 ${i * 10})`} d="M4 11C8 0 10 2 15 11S21 13 26 10S32 10 36 11" stroke={c} strokeWidth="1.5" />
            ))}
        </Tile>
    ),
    rta: <Tile><path d="M9 34V14M13 34V8M17 34V6M21 34V11M25 34V19M29 34V24M33 34V23" stroke="#0000c0" strokeWidth="2.4" /></Tile>,
    eq: (
        <Tile>
            <path d="M17 12H6V29H17M6 20.5H15" stroke="#0000b0" strokeWidth="4.5" />
            <circle cx="26.5" cy="20" r="8.5" fill="#00b4b4" stroke="#0000b0" strokeWidth="2.5" /><path d="M28 24l8 6-4 2-6-5Z" fill="#00b4b4" />
        </Tile>
    ),
    room: (
        <Tile>
            {[["#c00", 9], ["#b0b", 17], ["#080", 12], ["#c90", 17], ["#22c", 14], ["#c00", 9], ["#b90", 17], ["#b0b", 17]].map(([c, y], i) => (
                <path key={i} d={`M${8 + i * 3.5} 32V${y}`} stroke={c} strokeWidth="2.2" />
            ))}
            <path d="M6 33H34" stroke="#555" strokeWidth="1.5" />
        </Tile>
    ),
    wrench: (
        <svg width="40" height="40" viewBox="0 0 40 40" fill="none">
            <path d="M6 35L26 14" stroke="#8a8a8a" strokeWidth="6" strokeLinecap="round" /><path d="M9 31L23 17" stroke="#2d2d2d" strokeWidth="2" />
            <path d="M32 1q-9-1-9 8l-1 4 5 5 5-1q7-1 7-9l-4 4-5-1-1-5Z" fill="#e4e4e4" stroke="#777" strokeWidth=".5" />
            <circle cx="6.5" cy="34.5" r="1.8" fill="#1e1e1e" />
        </svg>
    ),
}

const ArrowMark = ({ x, y, turn }) => (
    <path transform={`translate(${x} ${y}) rotate(${turn})`} d="M0 5V-4M-4 0L0-4L4 0" stroke="#d8d8d8" strokeWidth="2.4" />
)

const graphIcons = {
    separate: (
        <svg width="46" height="31" viewBox="0 0 46 31" fill="none">
            <rect x="1" y="1" width="44" height="29" fill="#161616" stroke="#8a8a8a" strokeWidth="1.5" />
            {["#a01414", "#3c3cc0", "#108a10"].map((c, i) => (
                <path key={c} transform={`translate(0 ${i * 4})`} d="M2 11Q8 3 14 10T24 15T36 11L44 12" stroke={c} strokeWidth="1.8" />
            ))}
            <ArrowMark x={22} y={8} turn={0} /><ArrowMark x={22} y={23} turn={180} />
        </svg>
    ),
    scrollbars: (
        <svg width="44" height="31" viewBox="0 0 44 31">
            <rect x="7" y="1" width="36" height="21" fill="#101010" stroke="#8a8a8a" strokeWidth="1.5" />
            <rect x="0" y="7" width="4" height="11" fill="#8a8a8a" /><rect x="16" y="25" width="18" height="4" fill="#8a8a8a" />
        </svg>
    ),
    freq: (
        <svg width="46" height="31" viewBox="0 0 46 31" fill="none">
            <rect x="1" y="1" width="44" height="29" fill="#101010" stroke="#3c3c3c" strokeWidth="1.5" />
            <path d="M18 1V30M28 1V30M35 1V30M39.5 1V30M42 1V30" stroke="#3c3c3c" strokeWidth="1.5" />
        </svg>
    ),
    limits: (
        <svg width="46" height="31" viewBox="0 0 46 31" fill="none">
            <rect x="1" y="1" width="44" height="29" fill="#101010" stroke="#8a8a8a" strokeWidth="1.5" />
            <ArrowMark x={23} y={8} turn={0} /><ArrowMark x={23} y={23} turn={180} /><ArrowMark x={8} y={16} turn={-90} /><ArrowMark x={38} y={16} turn={90} />
        </svg>
    ),
    actions: (
        <svg width="30" height="31" viewBox="0 0 30 31">
            <rect x="1" y="2" width="28" height="28" fill="none" stroke="#8a8a8a" strokeWidth="1.5" />
            <path d="M1 7.5H29" stroke="#8a8a8a" strokeWidth="1.5" />
            <rect x="7" y="11" width="16" height="6" rx="2" fill="#8a8a8a" /><rect x="7" y="21" width="16" height="6" rx="2" fill="#8a8a8a" />
        </svg>
    ),
    gear: (
        <svg width="30" height="31" viewBox="-15 -15.5 30 31">
            {Array.from({ length: 12 }, (_, i) => <rect key={i} x="-2" y="-13.5" width="4" height="6" rx="1" fill="#c4c4c4" transform={`rotate(${i * 30})`} />)}
            <circle r="10.5" fill="#c0c0c0" /><circle r="5.5" fill="#888" /><circle r="3.5" fill="#1e1e1e" />
        </svg>
    ),
    camera: (
        <svg width="40" height="28" viewBox="0 0 40 28">
            <rect x="6" y="0" width="8" height="5" rx="1" fill="#ddd" />
            <rect x="1" y="3" width="38" height="24" rx="1" fill="#e6e6e6" stroke="#aaa" />
            <path d="M5 5q4 10 0 20" fill="none" stroke="#bbb" strokeWidth="2" />
            <circle cx="25.5" cy="15.5" r="9.5" fill="#aaa" /><circle cx="25.5" cy="15.5" r="7" fill="#8c8c8c" /><circle cx="25.5" cy="15.5" r="4" fill="#2a3148" /><circle cx="24" cy="14" r="1.2" fill="#ccd" />
        </svg>
    ),
}

const RemoveIcon = () => (
    <svg width="18" height="18" viewBox="0 0 18 18">
        <defs><radialGradient id="rm" cx=".5" cy=".8"><stop stopColor="#ff7a10" /><stop offset="1" stopColor="#c40f08" /></radialGradient></defs>
        <circle cx="9" cy="9" r="8.7" fill="url(#rm)" />
        <path d="M3 6.500a6.500 6.500 0 0 1 12 0Q9 9 3 6.500Z" fill="#fff" opacity=".3" />
        <path d="M5.500 5.500L12.500 12.500M12.500 5.500L5.500 12.500" stroke="#fff" strokeWidth="2.6" />
    </svg>
)

/* ---------- lists ---------- */

const menus = ["File", "Tools", "Preferences", "Graph", "Help", "Donate", "Pro Upgrades"]
const fileTools = [["Measure", "measure", 72], ["Open", "open", 70], ["Save all", "save", 62], ["Remove all", "remove", 106], ["Info", "info", 32]]
const viewTools = [["IR windows", "ir", 82], ["SPL meter", "spl", 82], ["Generator", "gen", 96], ["Scope", "scope", 53], ["Levels", "levels", 72], ["Overlays", "overlays", 68], ["RTA", "rta", 74], ["EQ", "eq", 52], ["Room sim", "room", 80]]
const graphTools = [["Scrollbars", "scrollbars", 68], ["Freq. Axis", "freq", 78], ["Limits", "limits", 50], ["Actions", "actions", 66], ["Controls", "gear", 58]]
const graphTabs = [["SPL & Phase", 103], ["All SPL", 63], ["Distortion", 86], ["Impulse", 72], ["Filtered IR", 86], ["GD", 40], ["RT60", 53], ["RT60 Decay", 96], ["Clarity", 62], ["Decay", 60], ["Waterfall", 79], ["Spectrogram", 105], ["Captured", 80]]

const bump = "M16 36Q18 31 22 29Q24 27 28 27Q32 28 34 36"
const peak = "M21 36Q24 32 27 29Q30 27 32 30L38 36"
const dome = "M16 36Q17 29 21 28Q28 27 34 28Q38 30 40 36"
const hills = "M46 36Q49 32 52 31H56L58 35L60 33L65 31L68 31L70 33L72 31L74 35M82 36L83 34M87 36L88 35L89 36M91 33L93 30V36L95 26L97 33L100 32V36"
const low = "M53 36L55 31L58 36L61 34L64 36L66 33L69 36L72 32L75 34L78 31L80 27L84 33L86 36M96 36L98 29L100 36"
const wide = "M46 36L50 32L54 31L57 33L60 31L64 33L68 30L71 34L74 30L76 34L80 27L84 35L87 32L90 36L94 35L96 28L98 36L100 28V36"
const grass = "M49 36L53 31L57 36M64 36L66 30L69 35L71 29L73 36L76 34L78 36L80 31L82 36L85 30L87 34L89 26L91 33L93 30L95 36L99 30L100 36"

const upper = [
    { no: 1, name: "830", color: "#b01414", d: bump },
    { no: 2, name: "831", color: "#178a28", d: grass },
    { no: 3, name: "Aligned sum", color: "#1464c0", d: bump },
    { no: 4, name: "832", color: "#b87008", d: bump },
    { no: 5, name: "833", color: "#a08c10", d: bump },
    { no: 6, name: "834", color: "#08a874", d: peak },
    { no: 7, name: "839", color: "#8a3cc0", d: peak },
    { no: 8, name: "Aligned sum", color: "#0c8ca0", d: bump },
    { no: 9, name: "840", color: "#5a48b8", d: peak },
    { no: 10, name: "841", color: "#b414b4", d: dome },
    { no: 11, name: "842", color: "#b01414", d: dome, beforeSelected: true },
]
const lower = [
    { no: 13, name: "845", color: "#1464c8", d: hills },
    { no: 14, name: "846", color: "#c87808", d: low },
    { no: 15, name: "Aligned sum", color: "#b09410", d: wide },
    { no: 16, name: "848", color: "#10b484", d: wide },
]

const legend = [
    ["1: 830", "#b80f0f", "46.0 dB"], ["2: 831", "#12722a", ""], ["3: Aligned sum", "#1464c0", ""],
    ["4: 832", "#d08008", "79.0 dB"], ["5: 833", "#98880c", ""], ["6: 834", "#08a874", ""],
    ["7: 839", "#9440d0", "44.4 dB"], ["8: Aligned sum", "#0c88a4", ""], ["9: 840", "#5a48b8", ""],
    ["10: 841", "#c010c0", "45.5 dB"], ["11: 842", "#b00f0f", ""], ["12: 844", "#178a28", ""],
    ["13: 845", "#1068d8", "82.4 dB", true], ["14: 846", "#d08008", "", true], ["15: Aligned sum", "#b09410", ""],
    ["16: 848", "#0cb080", "92.3 dB"], ["17: 849", "#8c34b8", ""],
]

function FolderTab({ item, selected, children }) {
    return (
        <TabRow>
            <svg viewBox="0 0 178 39" preserveAspectRatio="none" fill="none">
                <path d="M0 36.5H100L135 0H178V39H0Z" fill={selected ? "#303030" : "#171717"} />
                {item && (
                    <>
                        <path d="M9 36V10H126L100 36Z" fill="#111" />
                        <path d="M30 10V36M40 10V36M47 10V36M52 10V36M70 10V36M73 10V36M76 10V36M86 10V36M92 10V36M97 10V36M9 20H116" stroke="#1d1d1d" />
                        <path d="M9 36V10H126" stroke="#323232" strokeWidth="1.5" />
                        <path d={item.d} stroke={item.color} strokeWidth="1.3" />
                    </>
                )}
                {!selected && <path d="M0 39V36.5H100L135 0H178V39" stroke="#303030" strokeWidth="1.5" />}
            </svg>
            {children}
            {item && <TabLabel $key={item.no < 11}><b>{item.no}</b>{item.name}</TabLabel>}
            <RemoveButton aria-label="Remove measurement"><RemoveIcon /></RemoveButton>
        </TabRow>
    )
}

function MeasurementList() {
    return (
        <Side>
            <FolderTab>
                <ExpandButton>
                    Expand
                    <svg width="14" height="12" fill="none" stroke="#cfcfcf" strokeWidth="1.5"><path d="M1 1L6 6L1 11M7 1L12 6L7 11" /></svg>
                </ExpandButton>
            </FolderTab>
            {upper.map((m) => <FolderTab key={m.no} item={m} selected={m.beforeSelected} />)}
            <SelectedPanel>
                <SelectedTop>
                    <Preview>
                        <svg viewBox="80 339 342 226" preserveAspectRatio="none" fill="none">
                            <path d="M130 339V565M160 339V565M185 339V565M205 339V565M225 339V565M262 339V565M270 339V565M280 339V565M310 339V565M330 339V565M350 339V565M390 339V565M80 390H422M80 434H422M80 478H422M80 520H422" stroke="#222" strokeWidth="2" />
                            <path d="M80 555L86 520L91 480L97 545L105 562H118L124 465L130 525L140 480L153 440L170 415L185 395L200 393L212 412L220 398L235 393L248 398L262 422L275 415L285 438L290 405L298 440L303 395L315 415L322 388L330 420L340 390L345 405L352 425L357 385L365 420L372 388L380 430L387 400L395 440L405 450L412 470L418 510" stroke="#1f8f30" strokeWidth="3" />
                        </svg>
                        <div><span>12</span><span>844</span></div>
                        <div><span>20</span><span>20.0k</span></div>
                    </Preview>
                    <PreviewTools>
                        <button aria-label="Save measurement">
                            <svg width="18" height="18"><rect width="18" height="18" rx="1" fill="#555" /><rect x="4" width="11" height="8" fill="#eee" /><rect x="5" y="11" width="9" height="7" fill="#ccc" /><path d="M2 16L12 2" stroke="#d8a820" strokeWidth="3" /><path d="M11 3l2-3" stroke="#c22" strokeWidth="3" /></svg>
                        </button>
                        <button aria-label="Trace colour">
                            <svg width="18" height="20"><path d="M16 0L8 11" stroke="#666" strokeWidth="2" /><path d="M8 11L2 18" stroke="#d8c890" strokeWidth="2.4" /><path d="M1 19H17" stroke="#1f9a30" strokeWidth="2" /></svg>
                        </button>
                        <button aria-label="Notes">
                            <svg width="16" height="20"><path d="M0 1H10L16 7V20H0Z" fill="#c8c8c8" /><path d="M10 1V7H16" fill="#888" /><path d="M3 7h5M3 10h10M3 13h10M3 16h10" stroke="#666" /></svg>
                        </button>
                    </PreviewTools>
                </SelectedTop>
                <Notes>
                    <textarea readOnly aria-label="Measurement notes" value={"Delay -20.6119 ms\n(-7.070 m, -(23 ft 2.3\nin))\n relative to\nLoopback from 2:"} />
                    <Scroll>
                        <Arrow label="Scroll notes up" />
                        <Track><Thumb $size="31px" /></Track>
                        <Arrow turn={180} label="Scroll notes down" />
                    </Scroll>
                </Notes>
            </SelectedPanel>
            <TabRow>
                <svg viewBox="0 0 178 39" preserveAspectRatio="none" fill="none">
                    <path d="M0 0H178V29H0Z" fill="#303030" />
                    <path d="M0 36.5H100L135 0H178V39H0Z" fill="#171717" />
                    <path d="M0 39V36.5H100L135 0H178V39" stroke="#303030" strokeWidth="1.5" />
                </svg>
                <CalButton>Change Cal...</CalButton>
                <RemoveButton aria-label="Remove measurement"><RemoveIcon /></RemoveButton>
            </TabRow>
            {lower.map((m) => <FolderTab key={m.no} item={m} />)}
        </Side>
    )
}

function LegendPanel() {
    return (
        <Legend>
            {legend.map(([name, color, level, on]) => (
                <LegendItem key={name} $color={color}>
                    <CheckBox type="checkbox" defaultChecked={on} />
                    <span>{name}</span>
                    {name === "13: 845" ? (
                        <svg width="64" height="24" fill="none" stroke="#1478f0" strokeWidth="2">
                            <path d="M0 12H13M51 12H64" /><rect x="13" y="2" width="38" height="20" rx="4" />
                            <text x="18" y="17" fontSize="13" fill="#e8e8e8" stroke="none">1</text>
                            <path d="M31 5L23 19" stroke="#e8e8e8" strokeWidth="1.2" />
                            <text x="33" y="19" fontSize="11" fill="#e8e8e8" stroke="none">24</text>
                        </svg>
                    ) : <span />}
                    <span>{level}</span>
                </LegendItem>
            ))}
        </Legend>
    )
}

function GraphArea() {
    return (
        <GraphPane>
            <GraphHeader>
                <ToolButton $width={114} $gap={6}>{graphIcons.camera}Capture</ToolButton>
                <GraphTabs>
                    {graphTabs.map(([text, width]) => (
                        <GraphTab key={text} $width={width} $active={text === "All SPL"}>{text}</GraphTab>
                    ))}
                </GraphTabs>
                <Spacer />
                <ToolButton $width={62} $gap={6}>{graphIcons.separate}Separate</ToolButton>
                <ToolButton as="div" $width={33} />
                {graphTools.map(([text, icon, width]) => (
                    <ToolButton key={text} $width={width} $gap={6}>{graphIcons[icon]}{text}</ToolButton>
                ))}
            </GraphHeader>
            <GraphGrid>
                <SplScroll>
                    <Scroll>
                        <Arrow label="Scroll up" />
                        <Track $offset="42px"><Thumb $size="24px" /></Track>
                        <Arrow turn={180} label="Scroll down" />
                    </Scroll>
                </SplScroll>
                <Gutter>
                    <Canvas textAnchor="end">
                        <text x="44" y="-9">SPL</text>
                        <rect x="8" y="-9" width="41" height="20" fill="#161616" stroke="#4a80d8" strokeWidth="2" />
                        <text x="46" y="7" fill="#5c86d2">108.8</text>
                        {splTicks.map((v) => <text key={v} x="48" y={splY(v)} dy="5">{v}</text>)}
                    </Canvas>
                </Gutter>
                <SplPlot />
                <Gutter><Canvas textAnchor="end"><text x="47" y="21">%</text></Canvas></Gutter>
                <FreqAxis />
                <Gutter>
                    <Canvas textAnchor="end">
                        {percentTicks.map((v) => <text key={v} x="48" y={percentY(v)} dy="5">{v}</text>)}
                    </Canvas>
                </Gutter>
                <ImpulsePlot />
                <TimeScroll>
                    <Canvas textAnchor="middle">
                        {timeLabels.map((t, i) => <text key={t} x={timeX(i)} y="20">{t}</text>)}
                        <text x={timeX(21)} y="20" dx="4">6.5ms</text>
                    </Canvas>
                </TimeScroll>
                <TimeScroll>
                    <Scroll $horizontal>
                        <Arrow turn={-90} label="Scroll left" />
                        <Track />
                        <Arrow turn={90} label="Scroll right" />
                    </Scroll>
                </TimeScroll>
            </GraphGrid>
            <LegendPanel />
        </GraphPane>
    )
}

/* ---------- alignment tool ---------- */

function Combo({ label, value, focus, pad = 8 }) {
    return (
        <SelectBox $focus={focus} $pad={pad}>
            <select aria-label={label} defaultValue={value}><option>{value}</option></select>
            <svg width="10" height="7"><path d="M0 0H10L5 7Z" fill="#e6e6e6" /></svg>
        </SelectBox>
    )
}

function Level({ label, value }) {
    return <Slider type="range" aria-label={label} min="0" max="100" defaultValue={value} style={{ "--fill": `${value}%` }} />
}

function AlignmentTool() {
    return (
        <ToolWindow>
            <ToolTitle>
                Alignment tool
                <button aria-label="Close alignment tool">
                    <svg width="14" height="14" stroke="#eee" strokeWidth="1.3"><path d="M1 1L13 13M13 1L1 13" /></svg>
                </button>
            </ToolTitle>
            <ToolBody>
                <ToolGrid>
                    <PushButton $width="90px">Reset all</PushButton>
                    <Combo label="First measurement" value="13: 845" />
                    <PushButton>Aligned copy</PushButton>

                    <Field>Gain (dB):<input defaultValue="0.0" /></Field>
                    <Level label="Gain of first" value={50} />
                    <CheckField><CheckBox type="checkbox" />Invert polarity</CheckField>

                    <span /><span /><span />

                    <span />
                    <Combo label="Second measurement" value="14: 846" />
                    <PushButton>Aligned copy</PushButton>

                    <Field>Gain (dB):<input defaultValue="0.0" /></Field>
                    <Level label="Gain of second" value={50} />
                    <CheckField><CheckBox type="checkbox" />Invert polarity</CheckField>

                    <Field>Delay (ms):<input defaultValue="0.78" /></Field>
                    <Level label="Delay" value={50} />
                    <span>268 mm, 10.53 in</span>

                    <span>Fine delay adjustment:</span>
                    <Level label="Fine delay" value={52} />
                </ToolGrid>
                <ToolSide>
                    <Combo label="Alignment mode" value="Impulse alignment" focus pad={4} />
                    <Combo label="Smoothing" value="1/24 smoothing" pad={5} />
                    <CheckField><CheckBox type="checkbox" defaultChecked />Show impulse responses</CheckField>
                    <PushButton>Filter IRs at cursor</PushButton>
                    <PushButton>Clear filter</PushButton>
                    <PushButton>Align IRs at cursor</PushButton>
                    <span>Align at 2,997 Hz</span>
                    <PushButton>Aligned sum</PushButton>
                </ToolSide>
            </ToolBody>
        </ToolWindow>
    )
}

/* ---------- taskbar ---------- */

const Dbx = ({ sub, top }) => (
    <svg width="30" height="30">
        <rect width="30" height="30" rx="5" fill={top} />
        <text x="15" y="17" fontSize="14" fontWeight="700" fill="#e02028" textAnchor="middle" fontFamily="Liberation Sans, sans-serif">dbx</text>
        <text x="15" y="25" fontSize="5" fill="#fff" textAnchor="middle" fontFamily="Liberation Sans, sans-serif">{sub}</text>
    </svg>
)

const BlueOrb = () => (
    <svg width="30" height="30" fill="none">
        <rect width="30" height="30" fill="#fff" /><circle cx="15" cy="15" r="10.5" fill="#3c78b4" stroke="#94b4d0" strokeWidth="2" />
        <path d="M9 13Q11 8 16 8Q22 9 22 15Q21 20 17 22Q19 18 17 15L15 18L13 15L15 13Z" fill="#f4f8ff" />
    </svg>
)

const tasks = [
    { name: "DriveRack PA2", icon: <Dbx sub="DriveRack PA²" top="#484848" /> },
    { name: "File Explorer", icon: <svg width="30" height="30"><path d="M0 3h11l3 4h15v10H0Z" fill="#e8a200" /><path d="M0 8H14L17 6H28q2 0 2 2V28H0Z" fill="#ffc83a" /><path d="M5 28v-5q0-2 2-2h16q2 0 2 2v5Z" fill="#1570c0" /><path d="M10 25h10" stroke="#0c4c8c" strokeWidth="2" /></svg> },
    { name: "VENU360", open: true, icon: <Dbx sub="VENU360" top="#202022" /> },
    { name: "Audio console", icon: <BlueOrb /> },
    { name: "Lightning", open: true, icon: <svg width="30" height="30"><path d="M12 1H26L19 10L22 10L12 19L15 19L1 29L8 17H5Z" fill="#ff0" stroke="#111" /></svg> },
    {
        name: "Chrome", icon: (
            <svg width="30" height="30" viewBox="-15 -15 30 30">
                <circle r="15" fill="#fbc116" /><path d="M-13 -7.5A15 15 0 0 1 13 -7.5H0A7.5 7.5 0 0 0 -6.5 3.8Z" fill="#e33b2e" />
                <path d="M-13 -7.5A15 15 0 0 0 0 15L6.5 3.8A7.5 7.5 0 0 1 -6.5 3.8Z" fill="#229342" />
                <circle r="7.5" fill="#fff" /><circle r="5.8" fill="#1a73e8" />
            </svg>
        ),
    },
    {
        name: "REW", open: true, active: true, icon: (
            <svg width="30" height="30">
                <rect width="30" height="30" fill="#3a0f84" />
                <path d="M2 28V14L4 22L6 17L8 25L11 20L13 25L16 20L18 26L21 22L24 26L28 24V28Z" fill="#18c070" /><path d="M2 28V23L5 27L8 24L12 27H28V29H2Z" fill="#e8d820" />
                <text x="15" y="11" fontSize="11" fontWeight="700" fill="#e8e8f4" textAnchor="middle" fontFamily="Liberation Sans, sans-serif">REW</text>
            </svg>
        ),
    },
    {
        name: "Scheduler", open: true, icon: (
            <svg width="30" height="30" fill="none">
                <rect width="30" height="30" rx="5" fill="#f04848" /><rect x="9" y="9" width="12" height="12" rx="2" fill="#fff" /><path d="M12 15l2 2 4-4" stroke="#e33" strokeWidth="1.5" />
                {[5, 15, 25].map((x) => [5, 15, 25].map((y) => (x === 15 && y === 15 ? null : <circle key={`${x}-${y}`} cx={x} cy={y} r="2.2" fill="#fff" />)))}
            </svg>
        ),
    },
    { name: "Audio console 2", open: true, icon: <BlueOrb /> },
    {
        name: "Triad", open: true, icon: (
            <svg width="30" height="30" fill="none" strokeLinejoin="round">
                <path d="M15 2Q18 2 20 6L28 23Q29 28 25 28H5Q1 28 2 23L10 6Q12 2 15 2Z" fill="#0c1404" stroke="#94bc20" strokeWidth="2" />
                <path d="M11 9Q15 4 18 10L23 20Q23 24 19 22L13 14M7 20Q5 25 10 24H19M11 9Q8 13 12 15Q18 16 18 20Q15 22 11 20" stroke="#94bc20" strokeWidth="1.8" />
            </svg>
        ),
    },
]

function Taskbar() {
    return (
        <TaskBar>
            <button aria-label="Start">
                <svg width="31" height="31" fill="#35b4f4"><path d="M0 0H15V15H0ZM16 0H31V15H16Z" fill="#62d2fb" /><path d="M0 16H15V31H0ZM16 16H31V31H16Z" /></svg>
            </button>
            <SearchBox>
                <svg width="19" height="20" fill="none" stroke="#e8e8e8" strokeWidth="2"><circle cx="9" cy="8" r="6.5" /><path d="M13 13L18 18" /></svg>
                <input aria-label="Search" placeholder="Search" />
            </SearchBox>
            {tasks.map((t) => <TaskButton key={t.name} aria-label={t.name} $open={t.open} $active={t.active}>{t.icon}</TaskButton>)}
            <Tray>
                <svg width="30" height="20" fill="none" stroke="#f2f2f2" strokeWidth="2"><path d="M8 13L15 7L22 13" /></svg>
                <svg width="36" height="20" fill="none" stroke="#f2f2f2" strokeWidth="1.4"><rect x="6" y="3" width="19" height="14" rx="2" /><path d="M9 7h14M9 10h14" strokeDasharray="2 2" /><path d="M11 14h9" /></svg>
                <RiWifiLine size="22" />
                <svg width="20" height="20" fill="none" stroke="#f2f2f2" strokeWidth="1.5"><path d="M1 8V13H4L8 17V4L4 8Z" /><path d="M11 7q2 3 0 7M13 5q4 5 0 11" /><path d="M16 3q5 8 0 15" stroke="#777" /></svg>
                <svg width="22" height="20" fill="none" stroke="#f2f2f2" strokeWidth="1.5"><rect x="2" y="5" width="16" height="12" rx="2" /><path d="M20 9V13" strokeWidth="2" /><path d="M7 8H15V14H5Z" fill="#f2f2f2" stroke="none" /><path d="M5 0L1 7H4L3 12L8 5H5Z" fill="#fff" stroke="#222" strokeWidth=".6" /></svg>
                <Clock>1:00 PM<br />8/12/2025</Clock>
            </Tray>
        </TaskBar>
    )
}

export default function App() {
    return (
        <Screen>
            <GlobalStyle />
            <AppWindow>
                <TitleBar>
                    <MenuList>{menus.map((m) => <button key={m}>{m}</button>)}</MenuList>
                    <AppTitle>REW V5.31.3</AppTitle>
                    <WindowButtons>
                        <button aria-label="Minimize"><svg width="13" height="13" stroke="#999"><path d="M0 6H13" /></svg></button>
                        <button aria-label="Restore"><svg width="13" height="13" fill="none" stroke="#999"><rect x=".5" y="3" width="9.5" height="9.5" rx="1.5" /><path d="M3 .5H10Q12.5 .5 12.5 3V10" /></svg></button>
                        <button aria-label="Close"><svg width="13" height="13" stroke="#999"><path d="M0 0L13 13M13 0L0 13" /></svg></button>
                    </WindowButtons>
                </TitleBar>
                <Toolbar>
                    {fileTools.map(([text, icon, width]) => <ToolButton key={text} $width={width}>{toolIcons[icon]}{text}</ToolButton>)}
                    <Spacer $grow={412} />
                    {viewTools.map(([text, icon, width]) => <ToolButton key={text} $width={width}>{toolIcons[icon]}{text}</ToolButton>)}
                    <Spacer $grow={401} />
                    <ToolButton $width={88}>{toolIcons.wrench}Preferences</ToolButton>
                </Toolbar>
                <Workspace>
                    <Scroll $top="4px">
                        <Arrow label="Scroll list up" />
                        <Track><Thumb $size="66%" /></Track>
                        <Arrow turn={180} label="Scroll list down" />
                    </Scroll>
                    <MeasurementList />
                    <GraphArea />
                </Workspace>
                <StatusBar>
                    <StatusCell $width={104}>169/202MB</StatusCell>
                    <StatusCell $width={56}>48 kHz</StatusCell>
                    <StatusCell $width={140}>16-bit in, 16-bit out</StatusCell>
                    <StatusCell $width={336}>
                        <Bits $color="#8db52c">XXXX XXXX</Bits><Bits $color="#8db52c">XXXX XXXX</Bits>
                        <Bits $color="#5c86d2">0000 0000</Bits><Bits $color="#5c86d2">0000 0000</Bits>
                    </StatusCell>
                    <StatusCell $width={123}>16-bit input data</StatusCell>
                    <StatusCell>Peak input before clipping</StatusCell>
                </StatusBar>
                <AlignmentTool />
            </AppWindow>
            <Taskbar />
        </Screen>
    )
}
